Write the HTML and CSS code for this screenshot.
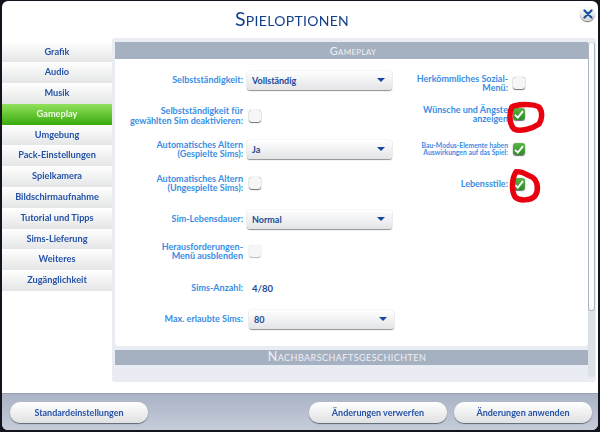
FILE: index.html
```html
<!DOCTYPE html>
<html lang="de">

<head>
    <meta charset="UTF-8">
    <meta name="viewport" content="width=device-width, initial-scale=1.0">
    <title>Spieloptionen</title>
    <link rel="stylesheet" href="styles.css">
</head>

<body>
    <div class="dialog">
        <div class="titlebar">
            <h1 class="title">Spieloptionen</h1>
            <div class="close">
                <svg width="10" height="10" viewBox="0 0 10 10">
                    <path d="M1.5 1.5 L8.5 8.5 M8.5 1.5 L1.5 8.5" stroke="#1c4f9c" stroke-width="2.2" stroke-linecap="round" fill="none" />
                </svg>
            </div>
        </div>

        <div class="main">
            <ul class="nav">
                <li>Grafik</li>
                <li>Audio</li>
                <li>Musik</li>
                <li class="active">Gameplay</li>
                <li>Umgebung</li>
                <li>Pack-Einstellungen</li>
                <li>Spielkamera</li>
                <li>Bildschirmaufnahme</li>
                <li>Tutorial und Tipps</li>
                <li>Sims-Lieferung</li>
                <li>Weiteres</li>
                <li>Zugänglichkeit</li>
            </ul>

            <div class="panel">
                <div class="section-head first">Gameplay</div>
                <div class="settings">
                    <div class="form-left">
                        <label class="lbl">Selbstständigkeit:</label>
                        <div class="select"><span>Vollständig</span><i class="arrow"></i></div>

                        <label class="lbl">Selbstständigkeit für<br>gewählten Sim deaktivieren:</label>
                        <div class="check"></div>

                        <label class="lbl">Automatisches Altern<br>(Gespielte Sims):</label>
                        <div class="select"><span>Ja</span><i class="arrow"></i></div>

                        <label class="lbl">Automatisches Altern<br>(Ungespielte Sims):</label>
                        <div class="check"></div>

                        <label class="lbl">Sim-Lebensdauer:</label>
                        <div class="select"><span>Normal</span><i class="arrow"></i></div>

                        <label class="lbl">Herausforderungen-<br>Menü ausblenden</label>
                        <div class="check disabled"></div>

                        <label class="lbl">Sims-Anzahl:</label>
                        <div class="value">4/80</div>

                        <label class="lbl">Max. erlaubte Sims:</label>
                        <div class="select shifted"><span>80</span><i class="arrow"></i></div>
                    </div>

                    <div class="form-right">
                        <label class="lbl">Herkömmliches Sozial-<br>Menü:</label>
                        <div class="check"></div>

                        <label class="lbl">Wünsche und Ängste<br>anzeigen</label>
                        <div class="check on">
                            <svg width="10" height="9" viewBox="0 0 10 9"><path d="M1 4.8 L3.8 7.6 L9 1.2" /></svg>
                        </div>

                        <label class="lbl small">Bau-Modus-Elemente haben<br>Auswirkungen auf das Spiel:</label>
                        <div class="check on">
                            <svg width="10" height="9" viewBox="0 0 10 9"><path d="M1 4.8 L3.8 7.6 L9 1.2" /></svg>
                        </div>

                        <label class="lbl">Lebensstile:</label>
                        <div class="check on">
                            <svg width="10" height="9" viewBox="0 0 10 9"><path d="M1 4.8 L3.8 7.6 L9 1.2" /></svg>
                        </div>
                    </div>
                </div>
                <div class="section-head second">Nachbarschaftsgeschichten</div>
                <div class="scrollbar"><div class="thumb"></div></div>
            </div>
        </div>

        <div class="footer">
            <button class="btn">Standardeinstellungen</button>
            <div class="footer-right">
                <button class="btn">Änderungen verwerfen</button>
                <button class="btn">Änderungen anwenden</button>
            </div>
        </div>
    </div>

    <!-- rote Kreise von Hand drübergemalt -->
    <svg class="scribble" width="600" height="432" viewBox="0 0 600 432">
        <path d="M514 106 C522 104 534 104 539 107 C543 112 542 120 539 124 C532 129 520 132 514 129 C509 124 509 112 512 107" />
        <path d="M516 172 C522 170 526 175 532 177 C538 181 539 190 535 196 C530 201 519 201 515 197 C511 190 512 178 516 172" />
    </svg>
</body>

</html>
```

FILE: styles.css
```css
html, body {
    margin: 0;
    padding: 0;
}

body {
    width: 600px;
    height: 432px;
    overflow: hidden;
    background-color: #14141f;
    font-family: "Lato", "Liberation Sans", sans-serif;
    position: relative;
}

.dialog {
    margin: 1px 2px 0 2px;
    width: 596px;
    height: 429px;
    background-color: #fff;
    border-radius: 6px;
    overflow: hidden;
    display: flex;
    flex-direction: column;
    position: relative;
    filter: blur(0.45px);
}

.titlebar {
    height: 37px;
    flex: none;
    display: flex;
    justify-content: center;
    align-items: center;
    padding-right: 16px;
    box-sizing: border-box;
}

.title {
    margin: 0;
    font-size: 19.5px;
    font-weight: 400;
    font-variant: small-caps;
    color: #123f8c;
    letter-spacing: 0.3px;
    padding-bottom: 3px;
}

.close {
    position: absolute;
    top: 5px;
    right: 3px;
    width: 15px;
    height: 15px;
    border-radius: 50%;
    background: linear-gradient(#ffffff, #d4d6da);
    box-shadow: 0 1px 1px #666;
    display: flex;
    align-items: center;
    justify-content: center;
}

.main {
    flex: none;
    height: 355px;
    display: flex;
    align-items: flex-start;
}

.nav {
    list-style: none;
    margin: 3.5px 0 0 0;
    padding: 0;
    width: 110px;
    flex: none;
}

.nav li {
    height: 20.8px;
    line-height: 20px;
    box-sizing: border-box;
    text-align: center;
    font-size: 9.2px;
    font-weight: 700;
    color: #2452a8;
    background: linear-gradient(#ffffff, #e4e5e6);
}

.nav li.active {
    color: #f2fbe8;
    background: linear-gradient(#92e05c, #38ab0c);
}

.panel {
    width: 484px;
    height: 344px;
    box-sizing: border-box;
    background-color: #e9edf3;
    border-radius: 3px;
    padding: 4px 3px 5px 3px;
    position: relative;
    display: flex;
    flex-direction: column;
}

.section-head {
    background-color: #a5b0c1;
    color: #eef1f5;
    font-variant: small-caps;
    text-align: center;
    letter-spacing: 0.3px;
    flex: none;
    box-sizing: border-box;
}

.section-head.first {
    height: 17px;
    line-height: 17px;
    width: 473px;
    font-size: 11px;
    padding-left: 3px;
}

.section-head.second {
    height: 15px;
    line-height: 14px;
    width: 477px;
    font-size: 12.5px;
    letter-spacing: 0.45px;
    padding-right: 13px;
}

.settings {
    width: 473px;
    height: 287px;
    flex: none;
    margin-bottom: 4px;
    background-color: #fff;
    border-radius: 0 0 4px 4px;
    display: flex;
    align-items: flex-start;
}

.form-left {
    width: 278px;
    flex: none;
    margin-top: 5px;
    display: grid;
    grid-template-columns: 128px 1fr;
    grid-template-rows: 32px 39px 28px 40px 32px 32px 42px 20px;
    column-gap: 4px;
    align-items: center;
}

.form-right {
    width: 135px;
    flex: none;
    margin-left: -1px;
    margin-top: 10px;
    display: grid;
    grid-template-columns: 116px 13px;
    grid-template-rows: 28px 34px 36px 34px;
    column-gap: 5px;
    align-items: center;
}

.lbl {
    text-align: right;
    color: #3a8de4;
    font-size: 9px;
    line-height: 9.5px;
    font-weight: 700;
    white-space: nowrap;
    justify-self: end;
}

.lbl.small {
    font-size: 6.8px;
    line-height: 7px;
}

.select {
    width: 145px;
    height: 19px;
    box-sizing: border-box;
    padding: 0 7px 0 5px;
    border-radius: 3px;
    background: linear-gradient(#ffffff, #e3e4e6);
    box-shadow: 0 1px 1px #8d8f94, 0 0 1px #aaa;
    display: flex;
    align-items: center;
    justify-content: space-between;
    font-size: 9px;
    font-weight: 700;
    color: #1d4a96;
}

.select.shifted {
    margin-left: 2px;
}

.arrow {
    width: 0;
    height: 0;
    border-left: 4px solid transparent;
    border-right: 4px solid transparent;
    border-top: 4px solid #1346a6;
}

.value {
    font-size: 9.5px;
    font-weight: 700;
    color: #1d4a96;
    padding-left: 5px;
}

.check {
    width: 12px;
    height: 12px;
    margin-left: 2px;
    border-radius: 3px;
    background: #f6f6f7;
    box-shadow: 0 1px 1px #6f7177, 0 0 1px #777;
}

.check.disabled {
    box-shadow: 0 1px 1px #b9bbc0, 0 0 1px #c6c8cc;
}

.form-right .check {
    margin-left: 0;
}

.check.on {
    background: linear-gradient(#5cb544, #2c8a2a);
    display: flex;
    align-items: center;
    justify-content: center;
}

.check.on path {
    stroke: #fff;
    stroke-width: 1.9;
    fill: none;
}

.scrollbar {
    position: absolute;
    top: 4px;
    right: 1px;
    width: 7px;
    height: 335px;
    background-color: #dce0e7;
    border-radius: 3px;
}

.thumb {
    height: 269px;
    background-color: #fbfcfd;
    border: 1px solid #aeb5c1;
    border-top-color: #dce0e7;
    box-sizing: border-box;
    border-radius: 3px;
}

.footer {
    flex: 1;
    background: linear-gradient(#a9b3c5, #c6ccd9);
    border-top: 1px solid #96a0b2;
    display: flex;
    justify-content: space-between;
    align-items: center;
    padding: 0 6px 0 8px;
}

.footer-right {
    display: flex;
    gap: 7px;
}

.btn {
    width: 138px;
    height: 21px;
    border: none;
    border-radius: 10px;
    background: linear-gradient(#ffffff, #e0e1e3);
    box-shadow: 0 1px 1px #5f6672;
    font-family: inherit;
    font-size: 9px;
    font-weight: 700;
    color: #2452a8;
    padding: 0;
}

.scribble {
    position: absolute;
    top: 0;
    left: 0;
}

.scribble path {
    fill: none;
    stroke: #e8000f;
    stroke-width: 5.5;
    stroke-linecap: round;
    stroke-linejoin: round;
}
```
